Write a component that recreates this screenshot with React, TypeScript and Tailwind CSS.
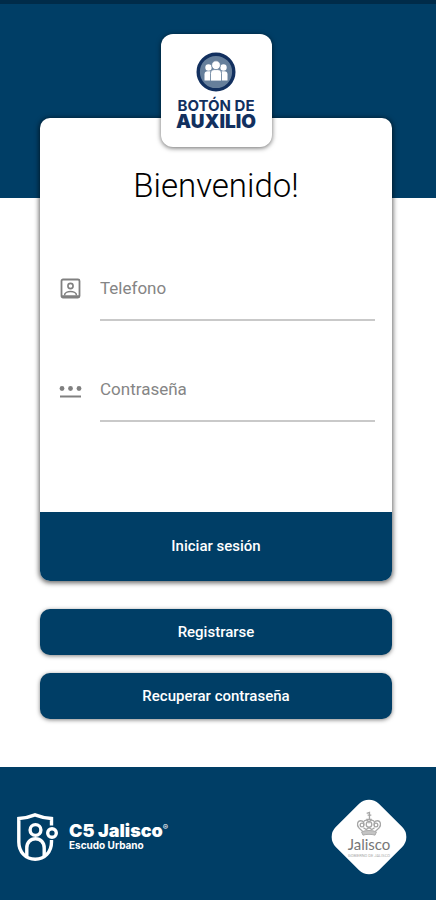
import { useState } from "react"
import type { ReactNode } from "react"

interface FieldProps {
  id: string
  label: string
  type: string
  icon: ReactNode
}

const AccountIcon = () => (
  <svg className="size-6" viewBox="0 0 24 24" fill="none" stroke="#808080" strokeWidth="1.8">
    <rect x="3.5" y="2.5" width="18" height="18" rx="1.5" />
    <circle cx="12.5" cy="9" r="2.6" strokeWidth="1.6" />
    <path d="M6.500 18.500c0-2.800 3.500-4 6-4s6 1.200 6 4" strokeWidth="1.6" />
    <path d="M4 19.500h17" strokeWidth="2.500" />
  </svg>
)

const PasswordIcon = () => (
  <svg className="size-6" viewBox="0 0 24 24" fill="#808080">
    <circle cx="4" cy="10.5" r="2.4" />
    <circle cx="12.5" cy="10.5" r="2.4" />
    <circle cx="21" cy="10.5" r="2.4" />
    <path d="M2 17.5h21v2H2z" />
  </svg>
)

const PeopleBadge = () => (
  <svg className="size-10" viewBox="0 0 40 40">
    <circle cx="20" cy="20" r="17.8" fill="#667f9b" stroke="#12305f" strokeWidth="3.4" />
    <g fill="#fff">
      <circle cx="12.5" cy="15.5" r="3.2" />
      <circle cx="27.5" cy="15.5" r="3.2" />
      <path d="M8.500 28.500v-6.200c0-2 1.200-3 3-3h3v9.200z" />
      <path d="M31.500 28.500v-6.200c0-2-1.200-3-3-3h-3v9.200z" />
    </g>
    <g fill="#fff" stroke="#667f9b" strokeWidth="0.8">
      <circle cx="20" cy="13.2" r="4.4" />
      <path d="M14.500 29v-7.600c0-2.400 1.600-3.800 3.800-3.800h3.400c2.200 0 3.800 1.400 3.800 3.800V29z" />
    </g>
  </svg>
)

const ShieldLogo = () => (
  <svg className="h-[50px] w-11" viewBox="0 0 44 50" fill="none" stroke="#fff" strokeWidth="3.4">
    <path d="M36.500 13.500V6.500C30 6 25.500 5 20 2.800 14.500 5 10.500 6 3.800 6.500V30c0 10 7 17.300 16.400 17.300S36.500 40 36.500 30v-2" />
    <circle cx="20.500" cy="18" r="5.400" />
    <circle cx="37" cy="21" r="4.300" />
    <path d="M11.800 44V36c0-5.500 3.700-9.300 8.700-9.300s8.700 3.800 8.700 9.300v8" />
  </svg>
)

const JaliscoCrest = () => (
  <svg className="h-[26px] w-[26px]" viewBox="0 0 28 28" fill="none" stroke="#a6a6a6" strokeWidth="1.4">
    <path d="M11.500 2.500l3-1V9M12.500 4.500h4M11 9h6" />
    <path d="M3 18c-2.500-3-1.500-7.500 2-7.500 3 0 4.500 3 3 5.500M25 18c2.500-3 1.500-7.500-2-7.500-3 0-4.500 3-3 5.500" />
    <path d="M8 12c1-3 5-3 6 0 1-3 5-3 6 0" />
    <circle cx="6.500" cy="15" r="2" />
    <circle cx="21.500" cy="15" r="2" />
    <circle cx="14" cy="14.500" r="3" />
    <path d="M3 18c1 1.500 3 2.500 4 3.500M25 18c-1 1.500-3 2.500-4 3.500M8 18l3 2 3-2 3 2 3-2" />
    <path d="M6 22.500c4-2 12-2 16 0l-1.500 3.500c-4-1.200-9-1.200-13 0z" fill="#c4c4c4" strokeWidth="1" />
  </svg>
)

const Field: React.FC<FieldProps> = ({ id, label, type, icon }) => {
  const [value, setValue] = useState("")

  return (
    <div className="flex items-center gap-[18px]">
      <label htmlFor={id} aria-label={label}>
        {icon}
      </label>
      <input
        id={id}
        type={type}
        placeholder={label}
        value={value}
        onChange={(e) => setValue(e.target.value)}
        className="h-[65px] min-w-0 flex-1 border-b-2 border-[#c9c9c9] text-[17px] text-neutral-800 outline-none placeholder:text-[#858585]"
      />
    </div>
  )
}

const LoginCard = () => (
  <form
    onSubmit={(e) => e.preventDefault()}
    className="overflow-hidden rounded-[10px] bg-white shadow-[0_1px_5px_1px_rgba(0,0,0,0.6)]"
  >
    <h1 className="pt-12 text-center text-[33px] leading-10 font-light text-black">Bienvenido!</h1>
    <div className="mt-[50px] mb-[90px] flex flex-col gap-9 pr-[17px] pl-[18px]">
      <Field id="telefono" label="Telefono" type="tel" icon={<AccountIcon />} />
      <Field id="contrasena" label="Contraseña" type="password" icon={<PasswordIcon />} />
    </div>
    <button type="submit" className="h-[69px] w-full bg-[#003e66] text-[15px] font-medium text-white">
      Iniciar sesión
    </button>
  </form>
)

const ActionButton: React.FC<{ children: ReactNode }> = ({ children }) => (
  <button
    type="button"
    className="h-[46px] w-full rounded-[10px] bg-[#003e66] text-[15px] font-medium text-white shadow-[0_1px_4px_rgba(0,0,0,0.5)]"
  >
    {children}
  </button>
)

export default function App() {
  return (
    <div className="flex min-h-screen flex-col bg-white font-['Roboto',sans-serif]">
      <header className="h-[198px] border-t-4 border-[#002b49] bg-[#003e66]" />

      <main className="-mt-[164px] mr-11 mb-[46px] ml-10">
        <div className="relative mx-auto -mb-[29px] flex h-[113px] w-[111px] flex-col items-center rounded-[12px] bg-white pt-[18px] font-['Inter',sans-serif] text-[#12305f] shadow-[0_1px_5px_rgba(0,0,0,0.6)]">
          <PeopleBadge />
          <p className="mt-1.5 text-[15px] leading-4 font-bold whitespace-nowrap">BOTÓN DE</p>
          <p className="text-[19px] leading-4 font-black">AUXILIO</p>
        </div>
        <LoginCard />
        <div className="mt-7 flex flex-col gap-[18px]">
          <ActionButton>Registrarse</ActionButton>
          <ActionButton>Recuperar contraseña</ActionButton>
        </div>
      </main>

      <footer className="mt-auto flex h-[133px] items-center justify-between bg-[#003e66] pt-1.5 pr-7 pl-[15px]">
        <div className="flex items-center gap-2.5 font-['Inter',sans-serif] text-white">
          <ShieldLogo />
          <div>
            <p className="flex items-start text-[18px] leading-4 font-black">
              C5 Jalisco
              <span className="text-[8px] leading-[8px] font-normal">®</span>
            </p>
            <p className="text-[10px] leading-3 font-bold">Escudo Urbano</p>
          </div>
        </div>
        <div className="relative grid size-[78px] place-items-center">
          <svg className="absolute inset-0 size-full" viewBox="0 0 78 78">
            <rect x="8.500" y="8.500" width="61" height="61" rx="14" fill="#fff" transform="rotate(45 39 39)" />
          </svg>
          <div className="relative flex flex-col items-center pb-1 text-[#777]">
            <JaliscoCrest />
            <p className="font-['Lato',sans-serif] text-[15px] leading-[14px]">Jalisco</p>
            <p className="mt-0.5 text-[4px] leading-[5px] text-[#aaa]">GOBIERNO DE JALISCO</p>
          </div>
        </div>
      </footer>
    </div>
  )
}
